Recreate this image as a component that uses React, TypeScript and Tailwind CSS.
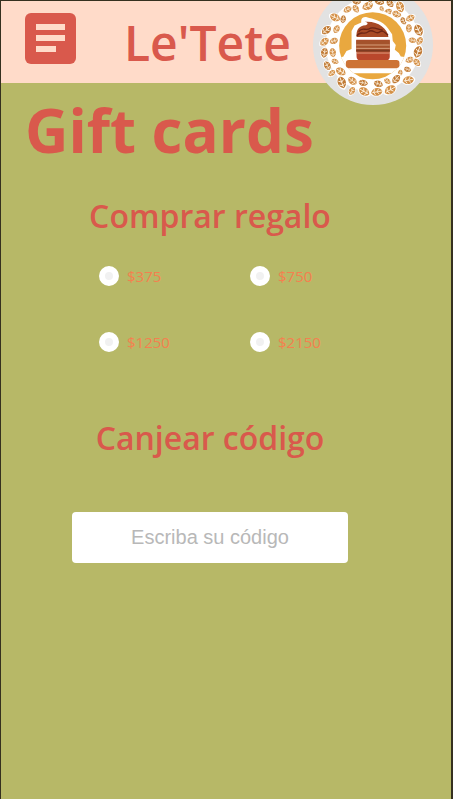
import React from "react";

type Leaf = [number, number, number, number];

// x, y, size, rotation of every leaf in the emblem's wreath
const leaves: Leaf[] = [
  [82, 90, 16, 140], [112, 87, 13, 120], [108, 52, 16, 25], [132, 57, 12, 100],
  [145, 28, 13, 150], [170, 26, 13, 60], [172, 4, 13, 10], [205, 18, 17, 155],
  [212, -6, 14, 80], [240, 4, 15, 20], [247, 26, 9, 70], [265, 37, 14, 140],
  [272, 10, 13, 50], [292, 42, 14, 20], [302, 20, 17, 70], [312, 62, 12, 60],
  [332, 54, 14, 150], [328, 84, 13, 90], [357, 90, 18, 65], [339, 120, 12, 10],
  [360, 122, 13, 120], [355, 155, 18, 110], [330, 178, 13, 160], [352, 186, 13, 50],
  [324, 207, 11, 20], [326, 239, 17, 170], [302, 218, 10, 100], [290, 236, 15, 130],
  [272, 268, 18, 150], [264, 242, 11, 40], [237, 250, 14, 20], [232, 274, 17, 170],
  [195, 273, 17, 30], [192, 247, 14, 10], [160, 241, 15, 40], [158, 271, 13, 120],
  [128, 246, 18, 70], [125, 213, 16, 30], [98, 218, 12, 140], [85, 196, 14, 60],
  [108, 183, 11, 20], [101, 157, 14, 80], [76, 157, 15, 100], [76, 124, 15, 140],
  [104, 122, 13, 160],
];

function Emblem() {
  return (
    <svg viewBox="42 -45 358 358" className="block w-full" role="img" aria-label="Le'Tete logo">
      <clipPath id="disc">
        <circle cx="220" cy="136" r="100" />
      </clipPath>
      <circle cx="221" cy="134" r="179" fill="#e2e2e2" />
      <circle cx="221" cy="134" r="141" fill="#ffffff" />
      {leaves.map(([x, y, s, r], i) => (
        <g key={i} transform={`translate(${x} ${y}) rotate(${r}) scale(${s / 15})`}>
          <path d="M-19 0C-15-15 12-17 19 0C12 17-15 15-19 0Z" fill="#fff" />
          <path d="M-15 0C-12-12 8-15 15 0C8 15-12 12-15 0Z" fill={i % 3 === 0 ? "#c07a35" : "#d39048"} />
          <path d="M-14 0H12M-6-7L-1 0L-6 7M4-8L8 0L4 8" fill="none" stroke="#fff4e4" strokeWidth="2.2" />
        </g>
      ))}
      <circle cx="221" cy="135" r="106" fill="#fff" />
      <g clipPath="url(#disc)">
        <rect x="110" y="30" width="220" height="210" fill="#e9a83f" />
        <path d="M100 173L132 169L142 152L157 146V92L166 76L186 67C184 54 192 49 203 51C220 56 250 60 266 85L278 102L280 122L289 134L286 148L298 158L304 168L340 173V218H100Z" fill="#fff" />
      </g>
      <path d="M172 110C170 88 180 76 199 75C209 73 205 66 196 65C232 61 264 82 267 110Z" fill="#a84a25" />
      <path d="M173 107C185 88 195 107 207 94C222 83 229 107 243 94C252 88 258 99 266 105M178 94C190 78 199 94 213 84C227 78 238 91 250 89" fill="none" stroke="#6d2615" strokeWidth="4" />
      <path d="M171 118H271V170Q270 180 260 180H183Q173 180 172 170Z" fill="#b9472c" />
      <path d="M171 120H271V154H171Z" fill="#a4522b" />
      <path d="M171 134H271M171 144H271M172 158H271" stroke="#f0c6a4" strokeWidth="2" />
      <path d="M171 151H271" stroke="#7d3a22" strokeWidth="5" />
      <rect x="140" y="179" width="160" height="24" rx="9" fill="#cd7335" />
    </svg>
  );
}

const amounts = [375, 750, 1250, 2150];

export default function App() {
  return (
    <div className="relative min-h-screen overflow-hidden border-t border-r-2 border-l border-[#35301f] bg-[#b7b867] font-['Open_Sans',sans-serif] text-[#d9594c]">
      <header className="flex h-[82px] items-start bg-[#ffdbc9] pt-3 pl-6">
        <button type="button" aria-label="Menú" className="h-[51px] w-[51px] shrink-0 rounded-md bg-[#d9594c]">
          <svg viewBox="0 0 51 51" className="block w-full" fill="#ffdbc9" aria-hidden="true">
            <path d="M11 11H40V17H11ZM11 22H40V28H11ZM11 33H31V39H11Z" />
          </svg>
        </button>
        <p className="ml-12 text-[48px] leading-[60px] font-semibold">Le'Tete</p>
      </header>
      <div className="absolute -top-4 right-[18px] w-[120px]">
        <Emblem />
      </div>
      <main>
        <h1 className="pt-[15px] pl-6 text-[60px] leading-[64px] font-bold">Gift cards</h1>
        <div className="pr-8">
          <h2 id="buy" className="mt-[34px] text-center text-[32px] leading-10 font-semibold">
            Comprar regalo
          </h2>
          <div
            role="radiogroup"
            aria-labelledby="buy"
            className="mt-7 ml-[98px] grid grid-cols-2 gap-y-[42px] pr-[18px] text-[15px] leading-6 text-[#f4804f]"
          >
            {amounts.map((amount) => (
              <label key={amount} className="flex items-center gap-2">
                <input
                  type="radio"
                  name="amount"
                  value={amount}
                  className="h-5 w-5 appearance-none rounded-full border-[6px] border-white bg-[#f1f1f1] checked:bg-[#d9594c]"
                />
                <span>{`$${amount}`}</span>
              </label>
            ))}
          </div>
          <h2 className="mt-16 text-center text-[32px] leading-10 font-semibold">
            <label htmlFor="code">Canjear código</label>
          </h2>
          <input
            id="code"
            type="text"
            placeholder="Escriba su código"
            className="mx-auto mt-[54px] block h-[51px] w-[66%] rounded bg-white text-center font-['Liberation_Sans',sans-serif] text-xl text-neutral-700 placeholder:text-[#b8b8b8]"
          />
        </div>
      </main>
    </div>
  );
}
